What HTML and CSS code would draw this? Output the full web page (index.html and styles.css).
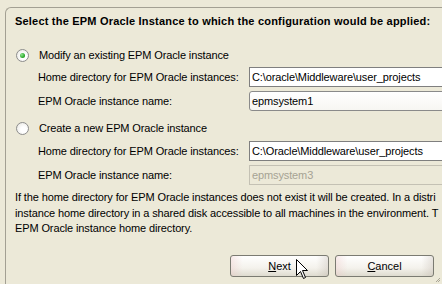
FILE: index.html
```html
<!DOCTYPE html>
<html lang="en">
  <head>
    <meta charset="UTF-8" />
    <meta name="viewport" content="width=device-width, initial-scale=1.0" />
    <title>EPM Oracle Instance</title>
    <link rel="stylesheet" href="styles.css">
  </head>
  <body>
    <div class="panel">
      <h1 class="title">Select the EPM Oracle Instance to which the configuration would be applied:</h1>

      <div class="option first">
        <span class="radio checked"></span>
        <span>Modify an existing EPM Oracle instance</span>
      </div>
      <div class="field">
        <label>Home directory for EPM Oracle instances:</label>
        <div class="input">C:\oracle\Middleware\user_projects</div>
      </div>
      <div class="field gap2">
        <label>EPM Oracle instance name:</label>
        <div class="input combo">epmsystem1</div>
      </div>

      <div class="option second">
        <span class="radio"></span>
        <span>Create a new EPM Oracle instance</span>
      </div>
      <div class="field gap1">
        <label>Home directory for EPM Oracle instances:</label>
        <div class="input">C:\Oracle\Middleware\user_projects</div>
      </div>
      <div class="field gap2">
        <label>EPM Oracle instance name:</label>
        <div class="input disabled">epmsystem3</div>
      </div>

      <p class="note">
        If the home directory for EPM Oracle instances does not exist it will be created. In a distri<br />
        instance home directory in a shared disk accessible to all machines in the environment. T<br />
        EPM Oracle instance home directory.
      </p>

      <div class="buttons">
        <button class="btn"><u>N</u>ext</button>
        <button class="btn"><u>C</u>ancel</button>
      </div>
    </div>

    <svg class="cursor" width="13" height="21" viewBox="0 0 13 21">
      <path d="M0.5 0.5 L0.5 16.5 L4.5 12.5 L7.5 19.5 L9.5 18.5 L6.5 11.5 L11.5 11.5 Z" fill="#fff" stroke="#000" stroke-width="1" />
    </svg>
    <svg class="grip" width="6" height="6" viewBox="0 0 6 6">
      <path d="M5 1 L1 5 M5 3 L3 5" stroke="#a9a595" stroke-width="1" />
    </svg>
  </body>
</html>
```
FILE: styles.css
```css
* {
  box-sizing: border-box;
}

body {
  margin: 0;
  width: 442px;
  height: 284px;
  overflow: hidden;
  background: #ece9d8;
  font-family: Tahoma, "Liberation Sans", Arial, sans-serif;
  font-size: 11px;
  letter-spacing: -0.12px;
  color: #000;
  position: relative;
}

.panel {
  margin: 7px 0 0 5px;
  width: 437px;
  height: 277px;
  overflow: hidden;
  border-top: 1px solid #a3a093;
  border-left: 1px solid #a3a093;
  border-top-left-radius: 6px;
  padding: 0 0 0 9px;
  display: flex;
  flex-direction: column;
}

.title {
  margin: 6px 0 0;
  font-size: 11px;
  line-height: 14px;
  font-weight: bold;
  letter-spacing: 0.2px;
  white-space: nowrap;
}

.option {
  display: flex;
  align-items: center;
  height: 22px;
  gap: 10px;
  padding-left: 1px;
}

.option.first {
  margin-top: 16px;
}

.option.second {
  margin-top: 5px;
}

.radio {
  flex-shrink: 0;
  width: 13px;
  height: 13px;
  border-radius: 50%;
  border: 1px solid #8d8d8d;
  background: radial-gradient(circle at 60% 60%, #ffffff 30%, #e4e3dc 100%);
  display: flex;
  align-items: center;
  justify-content: center;
}

.radio.checked::after {
  content: "";
  width: 5px;
  height: 5px;
  border-radius: 50%;
  background: radial-gradient(circle at 35% 35%, #8ee58e, #21a121 70%);
}

.field {
  display: flex;
  align-items: center;
  height: 22px;
  padding-left: 23px;
}

.field.gap1 {
  margin-top: 1px;
}

.field.gap2 {
  margin-top: 2px;
}

.field label {
  flex-shrink: 0;
  width: 211px;
  white-space: nowrap;
}

.input {
  flex-shrink: 0;
  width: 200px;
  height: 20px;
  padding: 0 0 0 2px;
  line-height: 18px;
  border: 1px solid #7f7f7f;
  background: #fff;
  white-space: nowrap;
}

.input.combo {
  border-color: #8a8a8a;
  border-radius: 3px;
  background: linear-gradient(#ffffff, #f7f6f2);
}

.input.disabled {
  border-color: #c4c1b4;
  background: #ece9d8;
  color: #a6a394;
}

.note {
  margin: 4px 0 0;
  line-height: 15.5px;
  white-space: nowrap;
}

.buttons {
  display: flex;
  gap: 6px;
  margin: 18px 0 0 215px;
}

.btn {
  width: 99px;
  height: 22px;
  padding: 0;
  font: inherit;
  color: #000;
  border: 1px solid #7b7b72;
  border-radius: 3px;
  background:
    linear-gradient(90deg, rgba(236, 196, 196, 0.35), rgba(255, 255, 255, 0) 12%, rgba(255, 255, 255, 0) 88%, rgba(190, 180, 170, 0.35)),
    linear-gradient(#ffffff, #f4f2ec 60%, #dedbcf);
}

.cursor {
  position: absolute;
  left: 296px;
  top: 259px;
}

.grip {
  position: absolute;
  left: 435px;
  top: 277px;
}
```
